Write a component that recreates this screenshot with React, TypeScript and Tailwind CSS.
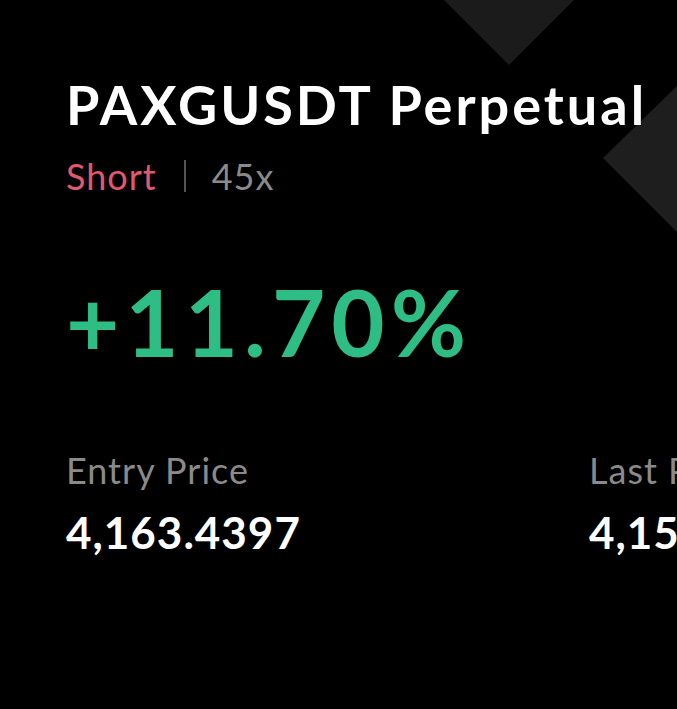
import React from "react";

const stats = [
  { label: "Entry Price", value: "4,163.4397" },
  { label: "Last Price", value: "4,150.2214" },
];

export default function App() {
  return (
    <div
      className="relative w-[677px] h-[709px] overflow-hidden bg-black text-white"
      style={{ fontFamily: "Lato, 'Open Sans', sans-serif" }}
    >
      {/* backdrop shapes */}
      <svg className="absolute inset-0 w-full h-full" viewBox="0 0 677 709">
        <polygon points="444,0 574,0 509,65" fill="#1b1b1b" />
        <polygon points="677,86 603,158 677,232" fill="#1e1e1e" />
      </svg>

      <div className="relative pl-[66px] pt-[75px]">
        <h1 className="text-[54px] font-bold leading-[60px] tracking-[3px] whitespace-nowrap">
          PAXGUSDT Perpetual
        </h1>
        <div className="mt-[21px] flex items-center text-[36px] leading-[40px] tracking-[1px]">
          <span className="text-[#e0596d]">Short</span>
          <span className="ml-[27px] mr-[26px] h-[32px] w-[2px] bg-[#555]" />
          <span className="text-[#8a8a8a]">45x</span>
        </div>

        <div className="mt-[76px] text-[92px] font-bold leading-[100px] tracking-[6px] text-[#2ebd85]">
          +11.70%
        </div>

        <div className="mt-[78px] flex gap-[180px] whitespace-nowrap">
          {stats.map((s) => (
            <div key={s.label} className="w-[343px] shrink-0">
              <div className="text-[36px] leading-[40px] tracking-[1px] text-[#8a8a8a]">{s.label}</div>
              <div className="mt-[18px] text-[44px] font-bold leading-[48px] tracking-[1px]">{s.value}</div>
            </div>
          ))}
        </div>
      </div>
    </div>
  );
}
